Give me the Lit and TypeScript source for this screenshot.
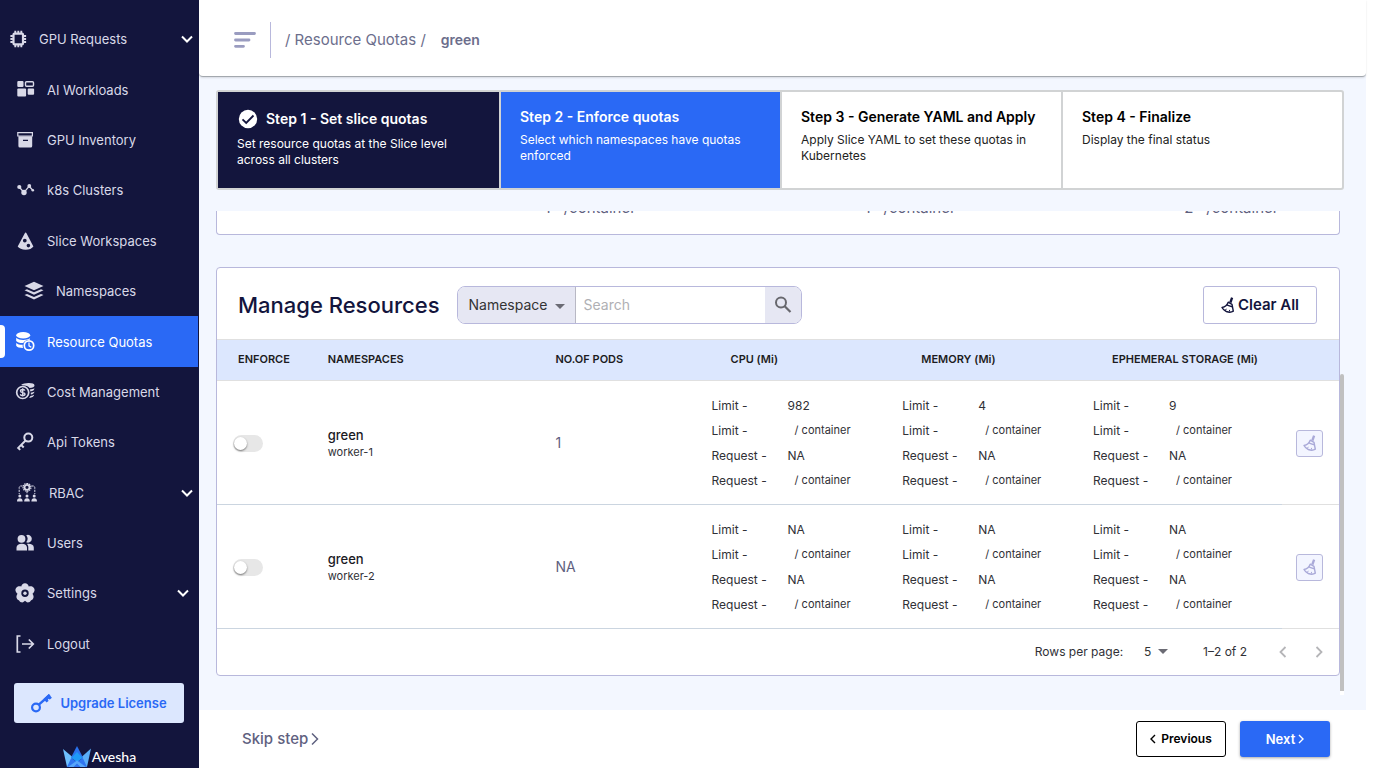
import { LitElement, html, css, svg, nothing, TemplateResult } from "lit";
import { customElement, property } from "lit/decorators.js";
import { classMap } from "lit/directives/class-map.js";

type NavItem = {
  label: string;
  icon: TemplateResult;
  variant?: "root" | "nested" | "wide";
  active?: boolean;
  chevron?: boolean;
  chevronInset?: boolean;
};

const icons = {
  chip: svg`<path fill="none" stroke="currentColor" stroke-width="2.200" d="M7.500 4.600h7.500a1 1 0 0 1 1 1v8.800a1 1 0 0 1-1 1H7.500a1 1 0 0 1-1-1V5.600a1 1 0 0 1 1-1z"/>
    <path stroke="currentColor" stroke-width="1.900" d="M8.300 1.800v2.500M11.300 1.800v2.500M14.300 1.800v2.500M8.300 15.700v2.500M11.300 15.700v2.500M14.300 15.700v2.500M3.400 7h2.500M3.400 10h2.500M3.400 13h2.500M16.600 7h2.500M16.600 10h2.500M16.600 13h2.500"/>`,
  workloads: svg`<rect x="2.300" y="1" width="6.200" height="6" rx="1"/><rect x="10.500" y="1.700" width="8" height="4.600" rx="1" fill="none" stroke="currentColor" stroke-width="1.400"/>
    <rect x="2.300" y="8.400" width="8.800" height="8" rx="1"/><rect x="12.700" y="8.400" width="6.400" height="6.400" rx="1"/>`,
  archive: svg`<path fill="none" stroke="currentColor" stroke-width="1.200" d="M2.800 2.700h14.600v3.300H2.800z"/>
    <path fill-rule="evenodd" d="M3.400 6.300h13.800v9.700a1.500 1.500 0 0 1-1.500 1.500H4.900a1.500 1.500 0 0 1-1.500-1.500zM8 9.700v1.200h5V9.700z"/>`,
  nodes: svg`<path fill="none" stroke="currentColor" stroke-width="1.300" d="M4.400 7.200 9 12.400l5.200-6.200 3.600 4"/>
    <circle cx="4.300" cy="7" r="2.100"/><circle cx="9" cy="12.500" r="2.700"/><circle cx="14.300" cy="6" r="1.900"/><circle cx="17.800" cy="10.200" r="1.300"/>`,
  slice: svg`<path fill-rule="evenodd" d="M10.600 1.500c.4 0 .7.300.9.700l6.900 13.200c-1.300 2-4.300 3.300-7.800 3.300S4 17.500 2.700 15.500L9.800 2.200c.2-.4.400-.7.800-.7zM9.800 7.700a1.900 1.900 0 1 0 0 3.800 1.900 1.900 0 0 0 0-3.800zm3.600 5.100a1.800 1.800 0 1 0 0 3.600 1.800 1.800 0 0 0 0-3.600z"/>`,
  layers: svg`<path d="M10 .8 19.500 5 10 9.200.5 5z"/><path d="m.5 9.300 2.500-1.100 7 3.100 7-3.100 2.500 1.100L10 13.800z"/><path d="m.5 14 2.500-1.100 7 3.100 7-3.100 2.500 1.100L10 18.500z"/>`,
  quotas: svg`<ellipse cx="8.200" cy="3.200" rx="7" ry="3.200"/>
    <path d="M1.200 5.700c1.600 1.600 4 2.200 7 2.200 2.800 0 5-.5 6.700-1.700v1.600c-3.200-.2-5.600 1.200-6.700 3.300-3.500.1-6-.9-7-2.200zM1.200 10.900c1.300 1.300 3.500 1.900 6.500 1.900-.1 1-.1 2 .3 3.200-3.500-.1-6-.9-6.800-2.300z"/>
    <circle cx="14" cy="13.500" r="4.700" fill="none" stroke="currentColor" stroke-width="1.700"/><path fill="none" stroke="currentColor" stroke-width="1.200" d="M14 10.500v3.300l2.300 1.500"/>`,
  cost: svg`<path d="M6 3C8 1.700 11 1 14 1.100c3 0 5.500.8 5.500 2.400s-2 2.300-5 2.500c-1-1.600-3-2.800-6-2.600zM14.900 7.400c2 0 3.500-.5 4.500-1.200 0 2-1.500 2.900-4 3.200zM15.700 10.700c1.700-.2 3-.6 3.700-1.200-.1 2-1.500 2.600-3.500 3zM15.500 13.900c1.400-.2 2.700-.5 3.600-1.100-.2 2-2 2.800-5 3.100z"/>
    <circle cx="7.700" cy="10.500" r="6" fill="none" stroke="currentColor" stroke-width="1.700"/>
    <path fill="none" stroke="currentColor" stroke-width="1.400" d="M9.900 8.700c-.2-.8-1-1.200-2.200-1.200-1.300 0-2.200.5-2.200 1.400C5.500 11.100 10 9.800 10 12.100c0 .9-.9 1.500-2.300 1.500-1.300 0-2.100-.5-2.400-1.400M7.700 6.300v8.300"/>`,
  key: svg`<circle cx="13.300" cy="5.600" r="4" fill="none" stroke="currentColor" stroke-width="2"/><path fill="none" stroke="currentColor" stroke-width="2" d="M10.600 8.500 3.200 15.900l2 2M6.200 13l2.500 2.500"/>`,
  rbac: svg`<circle cx="10" cy="4.300" r="2.500" fill="none" stroke="currentColor" stroke-width="1.800"/><path fill="none" stroke="currentColor" stroke-width="1.300" stroke-dasharray="1.300 .8" d="M10 .4a3.900 3.900 0 1 1 0 7.800 3.900 3.900 0 1 1 0-7.800"/>
    <path fill="none" stroke="currentColor" stroke-width="1" stroke-dasharray="2.200 1" d="M5.500 3H3.700C2.700 3 2.200 3.600 2.200 4.600V11M14.500 3h1.800c1 0 1.500.6 1.500 1.600V11M10 8v3"/>
    <circle cx="2.800" cy="13" r="1.500"/><circle cx="10" cy="13" r="1.500"/><circle cx="17.200" cy="13" r="1.500"/>
    <path d="M0 18.500c0-2.300 1-3.300 2.800-3.300s2.800 1 2.800 3.300zM7.200 18.500c0-2.300 1-3.300 2.800-3.300s2.800 1 2.800 3.300zM14.400 18.500c0-2.300 1-3.300 2.800-3.300s2.800 1 2.800 3.300z"/>`,
  users: svg`<circle cx="6.500" cy="5.800" r="3.900"/><path d="M11.200 2.300a3.900 3.900 0 1 1 0 7 5.500 5.500 0 0 0 0-7z"/>
    <path d="M1.500 17.500v-3c0-2.300 2.300-3.700 5.300-3.700s5.200 1.400 5.200 3.700v3zM13.300 17.500v-3.200c0-1.500-.5-2.600-1.300-3.400 3.800-.4 6.800.9 6.800 3.500v3.100z"/>`,
  flower: svg`<path fill-rule="evenodd" d="M10 .2c2 0 3.500 1.500 3.700 3.400 1.900-.6 4.500-.2 5.500 1.900 1 2-.1 4-1.700 5.200 1.100 1.500 1.700 3.800.2 5.600-.6.700-1.500 1-1.800 1.200-.4.800-.9 1.500-2 1.800-1.900.5-3-.5-3.900-1.500-.9 1-2 2-3.900 1.500-1.100-.3-1.600-1-2-1.800-.3-.2-1.200-.5-1.800-1.200-1.500-1.800-.9-4.100.2-5.600C.9 9.500-.2 7.500.8 5.500c1-2.100 3.600-2.500 5.500-1.900C6.500 1.700 8 .2 10 .2zm0 6.300a3.700 3.700 0 1 0 0 7.400 3.700 3.700 0 0 0 0-7.400z"/><circle cx="10" cy="10.200" r="1.700"/>`,
  logout: svg`<path fill="none" stroke="currentColor" stroke-width="1.700" d="M5.500 2H2.300v16h3.200M7 10h11M13.800 5.500l4.500 4.500-4.500 4.500"/>`,
  chevronDown: svg`<path fill="none" stroke="currentColor" stroke-width="2" d="m1 1.500 5 5 5-5"/>`,
  broom: svg`<path d="M10 .2 12.200.9 10.500 6 8.200 5.200z"/><path fill="none" stroke="currentColor" stroke-width="1.400" stroke-linejoin="round" d="M7.200 5.200 11 7.300l1.300 6.900c-1.800 1.200-4.600 1.200-7 .3C3.400 13.700 2 12.400 1 10.500c2.700-.6 5.200-2.400 6.200-5.300zM5.600 7.800l5.700 2"/><path fill="none" stroke="currentColor" stroke-width="1" d="m4.500 13.200.8-1.400M8.300 14.500l.3-1.600"/>`,
};

const sharedBox = css`
  *,
  *::before,
  *::after {
    box-sizing: border-box;
  }
  svg {
    display: block;
    fill: currentColor;
    flex: none;
  }
`;

@customElement("side-nav")
export class SideNav extends LitElement {
  static styles = [
    sharedBox,
    css`
      :host {
        display: flex;
        flex-direction: column;
        background: #13153d;
        padding-top: 14px;
        overflow: hidden;
      }
      nav {
        flex: 1;
        display: flex;
        flex-direction: column;
      }
      .item {
        flex: 1 0 auto;
        display: flex;
        align-items: center;
        gap: 12px;
        margin-right: 1px;
        padding: 0 5px 0 15px;
        position: relative;
        color: #d9d9e8;
        font-size: 13px;
        line-height: 18px;
        text-decoration: none;
      }
      .item.root {
        padding-left: 7px;
      }
      .item.wide {
        padding-left: 17px;
      }
      .item.nested {
        padding-left: 24px;
      }
      .item.active {
        background: #2a69f5;
        color: #fff;
      }
      .item.active::before {
        content: "";
        position: absolute;
        left: 0;
        top: 9px;
        bottom: 9px;
        width: 5px;
        background: #fff;
        border-radius: 0 4px 4px 0;
      }
      .text {
        flex: 1;
      }
      .chevron {
        color: #fff;
      }
      .inset {
        margin-right: 4px;
      }
      .upgrade {
        margin: 14px 15px 23px 14px;
        height: 40px;
        display: flex;
        align-items: center;
        justify-content: center;
        gap: 8px;
        border: 0;
        border-radius: 3px;
        background: #dce7fe;
        color: #2a69f5;
        font: 600 13px/18px var(--font);
      }
      .brand {
        height: 22px;
        display: flex;
        align-items: center;
        justify-content: center;
        gap: 1px;
        color: #fff;
        font: 500 14px/22px Lato, sans-serif;
      }
    `,
  ];

  private items: NavItem[] = [
    { label: "GPU Requests", icon: icons.chip, variant: "root", chevron: true },
    { label: "AI Workloads", icon: icons.workloads },
    { label: "GPU Inventory", icon: icons.archive },
    { label: "k8s Clusters", icon: icons.nodes },
    { label: "Slice Workspaces", icon: icons.slice },
    { label: "Namespaces", icon: icons.layers, variant: "nested" },
    { label: "Resource Quotas", icon: icons.quotas, active: true },
    { label: "Cost Management", icon: icons.cost },
    { label: "Api Tokens", icon: icons.key },
    { label: "RBAC", icon: icons.rbac, variant: "wide", chevron: true },
    { label: "Users", icon: icons.users },
    { label: "Settings", icon: icons.flower, chevron: true, chevronInset: true },
    { label: "Logout", icon: icons.logout },
  ];

  render() {
    return html`
      <nav aria-label="Main">
        ${this.items.map(
          (i) => html`<a
            href="#"
            class=${classMap({
              item: true,
              active: !!i.active,
              root: i.variant === "root",
              nested: i.variant === "nested",
              wide: i.variant === "wide",
            })}
          >
            <svg width="20" height="20" viewBox="0 0 20 20">${i.icon}</svg>
            <span class="text">${i.label}</span>
            ${i.chevron
              ? html`<svg class=${classMap({ chevron: true, inset: !!i.chevronInset })} width="12" height="8" viewBox="0 0 12 8">
                  ${icons.chevronDown}
                </svg>`
              : nothing}
          </a>`
        )}
      </nav>
      <button class="upgrade" type="button">
        <svg width="21" height="20" viewBox="0 0 21 20">
          <circle cx="5" cy="14.500" r="3.900" fill="none" stroke="currentColor" stroke-width="2.200" />
          <path fill="none" stroke="currentColor" stroke-width="2.400" d="M7.800 11.700 18.800 2" />
          <path d="m12.500 6 3 3.600 2-1.700-.6-2.200 2 .8 2-1.800-3.200-3.600z" />
        </svg>
        Upgrade License
      </button>
      <div class="brand">
        <svg width="28" height="22" viewBox="0 0 28 22">
          <path fill="#6ec0ff" d="M0 3 9.500 11 7 21H4z" />
          <path fill="#5aaef9" d="M28 2.500 18.500 11 21 21h3z" />
          <path fill="#2a72ee" d="M14 0 8 11.500 14 16l6-4.500z" />
          <path fill="#1e9af8" d="m14 6-5.500 6L14 16l5.500-4z" />
          <path fill="#2f74f0" d="M8.200 12 4 21h20l-4.200-9-5.800 4z" />
          <path fill="#57a6fb" d="m14 14.500-9 6.500h5.500L14 17.500l3.500 3.500H23z" />
        </svg>
        Avesha
      </div>
    `;
  }
}

type Step = { title: string; text: string; state: "done" | "current" | "next" };

@customElement("step-list")
export class StepList extends LitElement {
  static styles = [
    sharedBox,
    css`
      :host {
        display: block;
      }
      ol {
        list-style: none;
        margin: 0;
        padding: 0;
        display: grid;
        grid-template-columns: repeat(4, 1fr);
        border: 2px solid #d1d3d4;
        border-radius: 3px;
        background: #fff;
      }
      .step {
        min-height: 96px;
        padding: 15px 16px 16px 19px;
        color: #222;
      }
      .step + .step {
        border-left: 2px solid #d1d3d4;
      }
      .done {
        background: #13153d;
        color: #fff;
      }
      .current {
        background: #2a69f5;
        color: #fff;
      }
      .title {
        display: flex;
        align-items: center;
        gap: 7px;
        margin: 0 0 5px;
        font-size: 14px;
        font-weight: 600;
        line-height: 20px;
      }
      .next .title {
        color: #000;
      }
      .done .title {
        line-height: 24px;
      }
      p {
        margin: 0;
        font-size: 12px;
        line-height: 16px;
      }
    `,
  ];

  private steps: Step[] = [
    { title: "Step 1 - Set slice quotas", text: "Set resource quotas at the Slice level across all clusters", state: "done" },
    { title: "Step 2 - Enforce quotas", text: "Select which namespaces have quotas enforced", state: "current" },
    { title: "Step 3 - Generate YAML and Apply", text: "Apply Slice YAML to set these quotas in Kubernetes", state: "next" },
    { title: "Step 4 - Finalize", text: "Display the final status", state: "next" },
  ];

  render() {
    return html`<ol>
      ${this.steps.map(
        (s) => html`<li class="step ${s.state}">
          <h2 class="title">
            ${s.state === "done"
              ? html`<svg width="22" height="22" viewBox="0 0 22 22">
                  <circle cx="11" cy="11" r="9.200" />
                  <path fill="none" stroke="#13153d" stroke-width="1.800" d="m5.500 11.300 3.700 3.700 7.300-7.500" />
                </svg>`
              : nothing}
            ${s.title}
          </h2>
          <p>${s.text}</p>
        </li>`
      )}
    </ol>`;
  }
}

type Row = { name: string; worker: string; pods: string; limits: [string, string, string] };

@customElement("resource-table")
export class ResourceTable extends LitElement {
  @property({ attribute: false }) rows: Row[] = [
    { name: "green", worker: "worker-1", pods: "1", limits: ["982", "4", "9"] },
    { name: "green", worker: "worker-2", pods: "NA", limits: ["NA", "NA", "NA"] },
  ];

  static styles = [
    sharedBox,
    css`
      :host {
        display: block;
        border: 1px solid #b8b8dc;
        border-radius: 4px;
        background: #fff;
        overflow: hidden;
      }
      .bar {
        display: flex;
        align-items: center;
        height: 71px;
        padding: 3px 22px 0 21px;
        gap: 17px;
      }
      h1 {
        margin: 0;
        color: #13153d;
        font-size: 22px;
        font-weight: 500;
        line-height: 30px;
      }
      .search {
        display: flex;
        width: 345px;
        height: 38px;
        border: 1px solid #b8b8dc;
        border-radius: 8px;
        overflow: hidden;
      }
      .pick {
        position: relative;
        display: flex;
        color: #6b6b74;
      }
      .pick svg {
        position: absolute;
        right: 11px;
        top: 17px;
        pointer-events: none;
      }
      select {
        appearance: none;
        border: 0;
        background: transparent;
        color: #333;
        font: 14px/20px var(--font);
      }
      .pick select {
        width: 118px;
        padding: 0 0 0 11px;
        border-right: 1px solid #b8b8c4;
        background: #e6e7f3;
      }
      .search input {
        flex: 1;
        min-width: 0;
        padding: 0 8px;
        border: 0;
        font: 14px/20px var(--font);
      }
      .search input::placeholder {
        color: #b0b0b4;
        opacity: 1;
      }
      .search button {
        width: 36px;
        padding: 0 0 0 8px;
        border: 0;
        background: #e6e7f3;
        color: #68686e;
      }
      .clear {
        margin-left: auto;
        display: flex;
        align-items: center;
        justify-content: center;
        gap: 4px;
        width: 114px;
        height: 38px;
        padding: 0;
        border: 1px solid #b8b8dc;
        border-radius: 3px;
        background: #fff;
        color: #13153d;
        font: 600 15px/20px var(--font);
      }
      table {
        width: 100%;
        table-layout: fixed;
        border-collapse: collapse;
      }
      .c-enforce {
        width: 8%;
      }
      .c-name {
        width: 20.3%;
      }
      .c-pods {
        width: 15.6%;
      }
      .c-res {
        width: 17%;
      }
      th {
        height: 41px;
        padding: 0 0 2px 21px;
        border-top: 1px solid #e0e0e0;
        border-bottom: 1px solid #e0e0e0;
        background: #dce7fe;
        color: #1c1c22;
        text-align: left;
        font-size: 11px;
        font-weight: 600;
        line-height: 16px;
      }
      td {
        padding: 12px 0 11px 21px;
        border-bottom: 1px solid #cbd5e0;
        color: #303036;
      }
      td.action {
        padding-left: 14px;
        border-bottom-color: #e0e0e0;
      }
      td.enforce {
        padding-left: 16px;
      }
      td.pods {
        color: #5f6180;
        font-size: 14px;
        line-height: 20px;
      }
      td.res {
        padding-left: 2px;
      }
      .name {
        color: #1a1a1f;
        font-size: 13px;
        font-weight: 500;
        line-height: 18px;
      }
      .worker {
        font-size: 11px;
        line-height: 16px;
      }
      .pairs {
        display: grid;
        grid-template-columns: 76px 1fr;
        margin: 0;
        font-size: 12px;
        line-height: 25px;
      }
      .pairs dt,
      .pairs dd {
        height: 25px;
        margin: 0;
      }
      .pairs .unit {
        padding-left: 7px;
        font-size: 11px;
      }
      .toggle {
        appearance: none;
        display: block;
        margin: 0;
        width: 30px;
        height: 17px;
        border-radius: 9px;
        background: #e7e7e7;
      }
      .toggle::before {
        content: "";
        display: block;
        width: 13px;
        height: 13px;
        margin: 2px 1px;
        border-radius: 50%;
        background: #fff;
        box-shadow: 0 1px 2px rgba(0, 0, 0, 0.5);
      }
      .sweep {
        display: grid;
        place-items: center;
        width: 27px;
        height: 27px;
        padding: 0;
        border: 1px solid #b8b8dc;
        border-radius: 3px;
        background: #f3f5ff;
        color: #a9a9d8;
      }
      .pager {
        display: flex;
        align-items: center;
        justify-content: flex-end;
        height: 46px;
        padding-right: 14px;
        color: #303036;
        font-size: 12px;
        line-height: 18px;
      }
      .size {
        position: relative;
        display: flex;
        margin: 0 35px 0 21px;
        color: #6b6b74;
      }
      .size select {
        width: 24px;
        padding: 0;
        font-size: 12px;
      }
      .size svg {
        position: absolute;
        right: 0;
        top: 7px;
        pointer-events: none;
      }
      .pager button {
        display: grid;
        place-items: center;
        width: 12px;
        height: 24px;
        padding: 0;
        border: 0;
        background: none;
        color: #b5b5b8;
      }
      .pager .prev {
        margin: 0 24px 0 30px;
      }
    `,
  ];

  private pairs(limit: string) {
    return html`<dl class="pairs">
      <dt>Limit -</dt>
      <dd>${limit}</dd>
      <dt>Limit -</dt>
      <dd class="unit">/ container</dd>
      <dt>Request -</dt>
      <dd>NA</dd>
      <dt>Request -</dt>
      <dd class="unit">/ container</dd>
    </dl>`;
  }

  render() {
    return html`
      <div class="bar">
        <h1>Manage Resources</h1>
        <div class="search">
          <span class="pick">
            <select aria-label="Search by">
              <option>Namespace</option>
            </select>
            <svg width="10" height="5" viewBox="0 0 10 5"><path d="M0 0h10L5 5z" /></svg>
          </span>
          <input type="text" placeholder="Search" aria-label="Search" />
          <button type="button" aria-label="Run search">
            <svg width="20" height="20" viewBox="0 0 20 20">
              <circle cx="8" cy="7.500" r="5" fill="none" stroke="currentColor" stroke-width="2" />
              <path fill="none" stroke="currentColor" stroke-width="2.200" d="m11.500 11 6 6" />
            </svg>
          </button>
        </div>
        <button class="clear" type="button">
          <svg width="13" height="16" viewBox="0 0 13 16">${icons.broom}</svg>
          Clear All
        </button>
      </div>
      <table>
        <colgroup>
          <col class="c-enforce" />
          <col class="c-name" />
          <col class="c-pods" />
          <col class="c-res" />
          <col class="c-res" />
          <col class="c-res" />
          <col />
        </colgroup>
        <thead>
          <tr>
            <th>ENFORCE</th>
            <th>NAMESPACES</th>
            <th>NO.OF PODS</th>
            <th>CPU (Mi)</th>
            <th>MEMORY (Mi)</th>
            <th>EPHEMERAL STORAGE (Mi)</th>
            <th></th>
          </tr>
        </thead>
        <tbody>
          ${this.rows.map(
            (r) => html`<tr>
              <td class="enforce"><input class="toggle" type="checkbox" role="switch" aria-label="Enforce ${r.worker}" /></td>
              <td>
                <div class="name">${r.name}</div>
                <div class="worker">${r.worker}</div>
              </td>
              <td class="pods">${r.pods}</td>
              ${r.limits.map((l) => html`<td class="res">${this.pairs(l)}</td>`)}
              <td class="action">
                <button class="sweep" type="button" aria-label="Clear ${r.worker}">
                  <svg width="13" height="16" viewBox="0 0 13 16">${icons.broom}</svg>
                </button>
              </td>
            </tr>`
          )}
        </tbody>
      </table>
      <div class="pager">
        <label for="size">Rows per page:</label>
        <span class="size">
          <select id="size">
            <option>5</option>
          </select>
          <svg width="10" height="5" viewBox="0 0 10 5"><path d="M0 0h10L5 5z" /></svg>
        </span>
        <span>1–2 of 2</span>
        <button class="prev" type="button" aria-label="Previous page">
          <svg width="8" height="12" viewBox="0 0 8 12"><path fill="none" stroke="currentColor" stroke-width="1.800" d="M6.500 1 1.500 6l5 5" /></svg>
        </button>
        <button type="button" aria-label="Next page">
          <svg width="8" height="12" viewBox="0 0 8 12"><path fill="none" stroke="currentColor" stroke-width="1.800" d="m1.500 1 5 5-5 5" /></svg>
        </button>
      </div>
    `;
  }
}

@customElement("app-root")
export class AppRoot extends LitElement {
  static styles = [
    sharedBox,
    css`
      :host {
        --font: Inter, "Liberation Sans", sans-serif;
        display: grid;
        grid-template-columns: 199px 1fr;
        box-sizing: border-box;
        height: 100vh;
        padding: 0 9px 14px 0;
        background: #fff;
        font-family: var(--font);
      }
      main {
        display: flex;
        flex-direction: column;
        min-width: 0;
        min-height: 0;
        background: #f3f7ff;
      }
      header {
        display: flex;
        align-items: center;
        height: 77px;
        padding: 3px 35px 0;
        background: #fff;
        border-bottom: 1px solid #a3a8ae;
        border-radius: 0 0 4px 4px;
        box-shadow: 0 1px 2px rgba(0, 0, 0, 0.12);
        color: #6c6e8c;
        font-size: 15px;
        line-height: 20px;
      }
      .menu {
        padding: 0;
        border: 0;
        background: none;
        color: #9a9cc0;
      }
      .crumbs {
        display: flex;
        align-items: center;
        gap: 15px;
        height: 36px;
        margin-left: 14px;
        padding-left: 14px;
        border-left: 1px solid #b8b8dc;
      }
      .crumbs a {
        color: inherit;
        text-decoration: none;
      }
      .crumbs strong {
        font-size: 14px;
        font-weight: 600;
      }
      step-list {
        margin: 13px 22px 21px 17px;
      }
      .scroll {
        flex: 1;
        display: flex;
        min-height: 0;
        margin: 0 22px 15px 17px;
        overflow: hidden;
      }
      .cards {
        flex: 1;
        min-width: 0;
      }
      .totals {
        display: flex;
        flex-direction: column;
        justify-content: flex-end;
        height: 24px;
        margin-bottom: 32px;
        overflow: hidden;
      }
      .totals-row {
        display: grid;
        grid-template-columns: 29.2% 28.5% 28.5% 1fr;
        flex: none;
        padding: 0 0 16px;
        border: 1px solid #b8b8dc;
        border-top: 0;
        border-radius: 0 0 4px 4px;
        background: #fff;
        color: #5f6180;
        font-size: 15px;
        line-height: 20px;
      }
      .amount {
        display: flex;
        gap: 13px;
      }
      .scrollbar {
        width: 4px;
        display: flex;
        flex-direction: column;
        justify-content: flex-end;
      }
      .thumb {
        height: 66.3%;
        border-bottom: 4px solid #fff;
        background: #c0c0c0;
        border-radius: 2px 2px 0 0;
      }
      footer {
        display: flex;
        align-items: center;
        height: 58px;
        padding: 0 36px 0 43px;
        background: #fff;
        gap: 14px;
      }
      footer button {
        display: flex;
        align-items: center;
        justify-content: center;
        gap: 5px;
        width: 90px;
        height: 36px;
        padding: 0;
        border: 1px solid #000;
        border-radius: 3px;
        background: #fff;
        color: #000;
        font: 600 12px/18px var(--font);
      }
      footer .next {
        gap: 3px;
        border: 0;
        background: #2a69f5;
        color: #fff;
        box-shadow: 0 1px 3px rgba(0, 0, 0, 0.35);
        font-size: 13px;
      }
      footer .skip {
        width: auto;
        margin-right: auto;
        gap: 3px;
        border: 0;
        color: #5f6180;
        font-size: 15px;
        font-weight: 500;
      }
    `,
  ];

  render() {
    return html`
      <side-nav></side-nav>
      <main>
        <header>
          <button class="menu" type="button" aria-label="Menu">
            <svg width="22" height="16" viewBox="0 0 22 16">
              <path fill="none" stroke="currentColor" stroke-width="2.800" stroke-linecap="round" d="M1.500 1.500h19M1.500 8h13.500M1.500 14.300h8" />
            </svg>
          </button>
          <div class="crumbs">
            <a href="#">/ Resource Quotas /</a>
            <strong>green</strong>
          </div>
        </header>
        <step-list></step-list>
        <div class="scroll">
          <div class="cards">
            <div class="totals">
              <div class="totals-row">
                <span></span>
                ${["1", "1", "2"].map((n) => html`<span class="amount"><span>${n}</span><span>/container</span></span>`)}
              </div>
            </div>
            <resource-table></resource-table>
          </div>
          <div class="scrollbar"><div class="thumb"></div></div>
        </div>
        <footer>
          <button class="skip" type="button">
            Skip step
            <svg width="8" height="14" viewBox="0 0 8 14"><path fill="none" stroke="currentColor" stroke-width="1.500" d="m1 1.500 5.500 5.500L1 12.500" /></svg>
          </button>
          <button type="button">
            <svg width="6" height="10" viewBox="0 0 6 10"><path fill="none" stroke="currentColor" stroke-width="1.400" d="M5 1 1 5l4 4" /></svg>
            Previous
          </button>
          <button class="next" type="button">
            Next
            <svg width="6" height="10" viewBox="0 0 6 10"><path fill="none" stroke="currentColor" stroke-width="1.400" d="m1 1 4 4-4 4" /></svg>
          </button>
        </footer>
      </main>
    `;
  }
}
